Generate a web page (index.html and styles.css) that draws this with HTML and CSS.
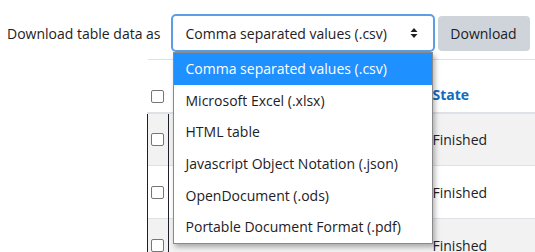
FILE: index.html
```html
<!DOCTYPE html>
<html lang="en">
<head>
    <meta charset="UTF-8">
    <title>Download table data</title>
    <link rel="stylesheet" href="styles.css">
</head>
<body>
    <div class="download-bar">
        <label class="download-label" for="dataformat">Download table data as</label>
        <div class="select-wrap">
            <div class="select-box" id="dataformat">
                <span>Comma separated values (.csv)</span>
                <svg class="select-arrows" width="8" height="12" viewBox="0 0 8 12">
                    <path d="M4 1 L7.5 5 H0.5 Z M4 11 L0.5 7 H7.5 Z" fill="#1d2125"/>
                </svg>
            </div>
            <ul class="select-menu">
                <li class="selected">Comma separated values (.csv)</li>
                <li>Microsoft Excel (.xlsx)</li>
                <li>HTML table</li>
                <li>Javascript Object Notation (.json)</li>
                <li>OpenDocument (.ods)</li>
                <li>Portable Document Format (.pdf)</li>
            </ul>
        </div>
        <button class="download-btn">Download</button>
    </div>

    <table class="results-table">
        <thead>
            <tr>
                <th class="col-check"><span class="checkbox"></span></th>
                <th class="col-name"></th>
                <th class="col-state">State</th>
            </tr>
        </thead>
        <tbody>
            <tr class="striped">
                <td class="col-check"><span class="checkbox"></span></td>
                <td class="col-name"></td>
                <td class="col-state">Finished</td>
            </tr>
            <tr>
                <td class="col-check"><span class="checkbox"></span></td>
                <td class="col-name"></td>
                <td class="col-state">Finished</td>
            </tr>
            <tr class="striped">
                <td class="col-check"><span class="checkbox"></span></td>
                <td class="col-name"></td>
                <td class="col-state">Finished</td>
            </tr>
        </tbody>
    </table>
</body>
</html>
```

FILE: styles.css
```css
* {
    margin: 0;
    padding: 0;
    box-sizing: border-box;
    font-family: "Open Sans", "Noto Sans", sans-serif;
}

body {
    background: #fff;
    color: #1d2125;
    font-size: 14px;
    width: 535px;
    height: 252px;
    overflow: hidden;
}

.download-bar {
    display: flex;
    align-items: center;
    padding: 14px 0 0 7px;
    height: 52px;
}

.download-label {
    margin-right: 10px;
}

.select-wrap {
    position: relative;
}

.select-box {
    width: 264px;
    height: 38px;
    border: 2px solid #5b9ee6;
    border-radius: 5px;
    display: flex;
    align-items: center;
    justify-content: space-between;
    padding: 0 15px 0 13px;
    background: #fff;
}

.select-arrows {
    display: block;
}

.select-menu {
    position: absolute;
    left: 2px;
    top: 38px;
    width: 260px;
    list-style: none;
    background: #fff;
    border: 1px solid #8a8a8a;
    box-shadow: 2px 3px 5px rgba(0, 0, 0, 0.3);
    z-index: 2;
}

.select-menu li {
    height: 31.7px;
    line-height: 31.7px;
    padding-left: 12px;
    white-space: nowrap;
}

.select-menu .selected {
    background: #1e90ff;
    color: #fff;
}

.download-btn {
    margin-left: 3px;
    width: 92px;
    height: 35px;
    border: none;
    border-radius: 4px;
    background: #ced4da;
    color: #1d2125;
    font-size: 14px;
}

.results-table {
    margin: 7px 0 0 147px;
    border-collapse: collapse;
    width: 388px;
    border-top: 1px solid #dee2e6;
}

.results-table th,
.results-table td {
    text-align: left;
    vertical-align: middle;
}

.results-table thead tr {
    height: 53px;
    border-bottom: 2px solid #dee2e6;
}

.results-table thead th {
    vertical-align: bottom;
    padding-bottom: 8px;
}

.results-table thead .col-check {
    padding-bottom: 9px;
}

.results-table tbody tr {
    height: 53px;
    border-top: 1px solid #dee2e6;
}

.results-table .striped {
    background: #f2f2f2;
}

.col-check {
    width: 21px;
    padding-left: 3px;
}

.results-table tbody .col-check {
    border-left: 1px solid #1d2125;
    border-right: 1px solid #1d2125;
}

.col-name {
    width: 264px;
}

.col-state {
    color: #1d2125;
}

th.col-state {
    color: #0f6cbf;
    font-weight: 700;
}

.checkbox {
    display: block;
    width: 13px;
    height: 13px;
    border: 1px solid #767676;
    border-radius: 2px;
    background: #fff;
}
```
